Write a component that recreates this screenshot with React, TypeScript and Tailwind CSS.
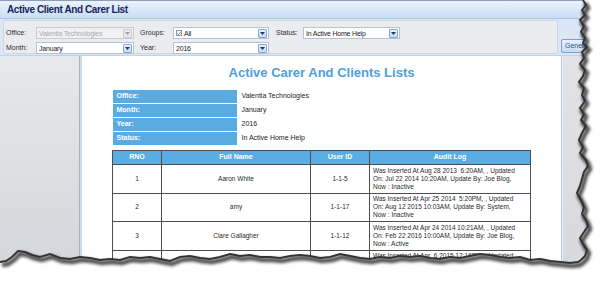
import React from "react";

const ui = { fontFamily: '"Liberation Sans", Arial, sans-serif' };

function Arrow({ disabled = false }: { disabled?: boolean }) {
  return (
    <div
      className={
        "w-[9px] h-[9px] mr-[1px] flex items-center justify-center rounded-[1px] border " +
        (disabled ? "border-[#c9ccd1] bg-[#e7e8ea]" : "border-[#86a8d6] bg-gradient-to-b from-[#e9f1fb] to-[#c7daf2]")
      }
    >
      <svg width="5" height="3" viewBox="0 0 5 3">
        <path d="M0 0 L5 0 L2.5 3 Z" fill={disabled ? "#9a9ea5" : "#1d3a66"} />
      </svg>
    </div>
  );
}

function Combo({ w, text, disabled = false, check = false }: { w: string; text: string; disabled?: boolean; check?: boolean }) {
  return (
    <div
      className={
        w +
        " h-[12px] flex items-center border " +
        (disabled ? "bg-[#f1f1f2] border-[#c8cacf] text-[#a9acb2]" : "bg-white border-[#b4c2d6] text-[#1b1b1b]")
      }
    >
      {check && (
        <div className="ml-[2px] w-[6px] h-[6px] border border-[#8c96a4] bg-[#f4f6f9] flex items-center justify-center">
          <svg width="5" height="5" viewBox="0 0 5 5">
            <path d="M0.8 2.6 L2 3.8 L4.3 1" stroke="#3b4350" strokeWidth="0.9" fill="none" />
          </svg>
        </div>
      )}
      <span className="flex-1 pl-[2px] text-[7px] leading-none whitespace-nowrap tracking-[-0.2px]">{text}</span>
      <Arrow disabled={disabled} />
    </div>
  );
}

const infoRows = [
  ["Office:", "Valentia Technologies"],
  ["Month:", "January"],
  ["Year:", "2016"],
  ["Status:", "In Active Home Help"],
];

const rows = [
  { rno: "1", name: "Aaron White", id: "1-1-5", log: ["Was Inserted At Aug 28 2013  6:20AM, , Updated", "On: Jul 22 2014 10:20AM, Update By: Joe Blog,", "Now : Inactive"] },
  { rno: "2", name: "amy", id: "1-1-17", log: ["Was Inserted At Apr 25 2014  5:20PM, , Updated", "On: Aug 12 2015 10:03AM, Update By: System,", "Now : Inactive"] },
  { rno: "3", name: "Clare Gallagher", id: "1-1-12", log: ["Was Inserted At Apr 24 2014 10:21AM, , Updated", "On: Feb 22 2016 10:00AM, Update By: Joe Blog,", "Now : Active"] },
  { rno: "4", name: "", id: "", log: ["Was Inserted At Apr  6 2015 12:16PM, , Updated", "On: Feb 22 2016 10:00AM, Update By: Joe Blog,", "Now : Active"] },
];

const rightEdge =
  "583,0 586,5 582,10 585,15 580,20 584,26 581,32 585,38 583,43 587,47 582,52 584,58 580,64 585,70 583,76 579,82 584,88 582,95 585,101 580,108 584,114 581,120 586,126 582,133 579,140 583,147 580,153 586,160 588,166 584,172 582,179 580,186 577,193 581,200 584,207 582,214 586,220 588,226 584,232 580,238 583,244 587,250 585,256 581,260 578,262";
const bottomEdge =
  "570,263 560,262 550,261 540,259 530,260 520,257 510,258 500,257 490,255 480,254 470,256 460,258 450,257 440,259 430,258 420,256 410,257 400,256 390,258 380,257 370,259 360,258 350,256 340,254 330,257 320,258 310,256 300,255 290,256 280,258 270,257 260,257 250,255 240,256 230,254 220,257 210,259 200,258 190,256 180,257 170,261 160,259 150,257 140,258 130,257 120,260 110,259 100,260 90,258 80,257 70,259 60,258 50,254 40,257 32,255 25,252 18,251 12,257 6,261 0,262";

export default function App() {
  return (
    <div className="relative w-[602px] h-[281px] overflow-hidden bg-white" style={ui}>
      <div className="w-[596px] h-[281px] flex flex-col">
        {/* title bar */}
        <div className="h-[19px] shrink-0 flex items-center pl-[7px] border-t border-[#8d9db3] border-b border-b-[#a8c2e4] bg-gradient-to-b from-[#eaf2fc] to-[#cbddf4]">
          <span className="text-[10px] font-bold tracking-[-0.4px] text-[#15275a]">Active Client And Carer List</span>
        </div>

        {/* filters */}
        <div className="h-[37px] shrink-0 flex bg-[#dbe7f6] border-b border-[#bfd2ec]">
          <div className="ml-[3px] mt-[1px] w-[555px] h-[34px] rounded-[2px] border border-[#cfd5de] bg-[#ebecef] pl-[2px] pt-[6px] flex flex-col gap-[3px] text-[#2c2c2c]">
            <div className="flex items-center h-[12px]">
              <span className="w-[30px] text-[7px]">Office:</span>
              <Combo w="w-[98px]" text="Valentia Technologies" disabled />
              <span className="ml-[6px] w-[33px] text-[7px]">Groups:</span>
              <Combo w="w-[96px]" text="All" check />
              <span className="ml-[7px] w-[27px] text-[7px]">Status:</span>
              <Combo w="w-[97px]" text="In Active Home Help" />
            </div>
            <div className="flex items-center h-[12px]">
              <span className="w-[30px] text-[7px]">Month:</span>
              <Combo w="w-[98px]" text="January" />
              <span className="ml-[6px] w-[33px] text-[7px]">Year:</span>
              <Combo w="w-[96px]" text="2016" />
            </div>
          </div>
          <div className="ml-[3px] mt-[20px] h-[14px] w-[30px] rounded-[2px] border border-[#7f9fcc] bg-gradient-to-b from-[#e8f0fb] to-[#c9dbf3] flex items-center pl-[3px]">
            <span className="text-[7px] text-[#2b5590]">Generate</span>
          </div>
        </div>

        {/* content */}
        <div className="flex-1 flex">
          <div className="w-[79px] shrink-0 bg-gradient-to-b from-[#e7e8eb] to-[#d4d5da]" />
          <div className="w-[1px] bg-[#a9b2bf]" />
          <div className="w-[2px] bg-[#c9d9ef]" />
          <div className="w-[479px] shrink-0 bg-white flex flex-col items-center pt-[9px]">
            <div className="h-[16px] text-[13px] leading-[16px] font-bold text-[#4ba1df]">Active Carer And Clients Lists</div>

            <div className="mt-[9px] w-[418px] flex flex-col gap-[1px]">
              {infoRows.map(([k, v]) => (
                <div key={k} className="flex h-[13px]">
                  <div className="w-[124px] bg-[#5aabe2] flex items-center pl-[4px] text-[7px] font-bold text-white">{k}</div>
                  <div className="flex-1 flex items-center pl-[5px] text-[7px] text-[#222]">{v}</div>
                </div>
              ))}
            </div>

            <table className="mt-[5px] w-[418px] border-collapse table-fixed text-[6.5px] text-[#2a2a2a]">
              <colgroup>
                <col className="w-[49px]" />
                <col className="w-[149px]" />
                <col className="w-[59px]" />
                <col className="w-[161px]" />
              </colgroup>
              <thead>
                <tr className="h-[14px] bg-[#5aade3] text-white font-bold">
                  {["RNO", "Full Name", "User ID", "Audit Log"].map((h) => (
                    <th key={h} className="border border-[#4a4f55] text-center font-bold p-0 text-[7px]">{h}</th>
                  ))}
                </tr>
              </thead>
              <tbody>
                {rows.map((r) => (
                  <tr key={r.rno} className="h-[28.5px]">
                    <td className="border border-[#4a4f55] text-center p-0">{r.rno}</td>
                    <td className="border border-[#4a4f55] text-center p-0">{r.name}</td>
                    <td className="border border-[#4a4f55] text-center p-0">{r.id}</td>
                    <td className="border border-[#4a4f55] pl-[3px] py-0 leading-[8px] whitespace-pre">
                      {r.log.map((l) => (
                        <div key={l}>{l}</div>
                      ))}
                    </td>
                  </tr>
                ))}
              </tbody>
            </table>
          </div>
          <div className="w-[1px] bg-[#b5c9e5]" />
          <div className="w-[1px] bg-[#e9eef6]" />
          <div className="flex-1 bg-gradient-to-b from-[#e2e3e7] to-[#d7d8dc]" />
        </div>
      </div>

      {/* torn paper edge */}
      <svg className="absolute inset-0 pointer-events-none" width="602" height="281" viewBox="0 0 602 281">
        <defs>
          <filter id="blur" x="-5%" y="-5%" width="110%" height="110%">
            <feGaussianBlur stdDeviation="1.4" />
          </filter>
        </defs>
        <polygon points={`602,0 ${rightEdge} ${bottomEdge} 0,281 602,281`} fill="#ffffff" />
        <polyline points={`${rightEdge} ${bottomEdge}`} transform="translate(2,3)" fill="none" stroke="#000" strokeOpacity="0.7" strokeWidth="4.5" filter="url(#blur)" />
        <polyline points={`${rightEdge} ${bottomEdge}`} fill="none" stroke="#333" strokeWidth="2" />
      </svg>
    </div>
  );
}
